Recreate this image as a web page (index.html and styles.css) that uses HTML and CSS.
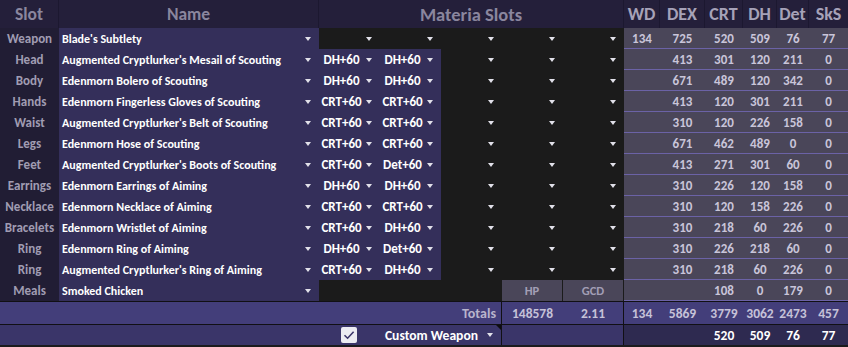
FILE: index.html
```html
<!DOCTYPE html>
<html>
<head>
<meta charset="utf-8">
<link rel="stylesheet" href="styles.css">
</head>
<body>
<div class="sheet">
  <div class="row head">
    <div class="h slot-h">Slot</div>
    <div class="h name-h">Name</div>
    <div class="h mat-h">Materia Slots</div>
    <div class="h sh">WD</div><div class="h sh">DEX</div><div class="h sh">CRT</div><div class="h sh">DH</div><div class="h sh">Det</div><div class="h sh">SkS</div>
  </div>

  <div class="row">
    <div class="slot">Weapon</div>
    <div class="name"><span>Blade's Subtlety</span><i class="dd"></i></div>
    <div class="mat e"><i class="dd"></i></div><div class="mat e"><i class="dd"></i></div><div class="mat e"><i class="dd"></i></div><div class="mat e"><i class="dd"></i></div><div class="mat e"><i class="dd"></i></div>
    <div class="st">134</div><div class="st">725</div><div class="st">520</div><div class="st">509</div><div class="st">76</div><div class="st">77</div>
  </div>

  <div class="row">
    <div class="slot">Head</div>
    <div class="name"><span>Augmented Cryptlurker's Mesail of Scouting</span><i class="dd"></i></div>
    <div class="mat f"><span>DH+60</span><i class="dd"></i></div><div class="mat f"><span>DH+60</span><i class="dd"></i></div><div class="mat e"><i class="dd"></i></div><div class="mat e"><i class="dd"></i></div><div class="mat e"><i class="dd"></i></div>
    <div class="st"></div><div class="st">413</div><div class="st">301</div><div class="st">120</div><div class="st">211</div><div class="st">0</div>
  </div>

  <div class="row">
    <div class="slot">Body</div>
    <div class="name"><span>Edenmorn Bolero of Scouting</span><i class="dd"></i></div>
    <div class="mat f"><span>DH+60</span><i class="dd"></i></div><div class="mat f"><span>DH+60</span><i class="dd"></i></div><div class="mat e"><i class="dd"></i></div><div class="mat e"><i class="dd"></i></div><div class="mat e"><i class="dd"></i></div>
    <div class="st"></div><div class="st">671</div><div class="st">489</div><div class="st">120</div><div class="st">342</div><div class="st">0</div>
  </div>

  <div class="row">
    <div class="slot">Hands</div>
    <div class="name"><span>Edenmorn Fingerless Gloves of Scouting</span><i class="dd"></i></div>
    <div class="mat f"><span>CRT+60</span><i class="dd"></i></div><div class="mat f"><span>CRT+60</span><i class="dd"></i></div><div class="mat e"><i class="dd"></i></div><div class="mat e"><i class="dd"></i></div><div class="mat e"><i class="dd"></i></div>
    <div class="st"></div><div class="st">413</div><div class="st">120</div><div class="st">301</div><div class="st">211</div><div class="st">0</div>
  </div>

  <div class="row">
    <div class="slot">Waist</div>
    <div class="name"><span>Augmented Cryptlurker's Belt of Scouting</span><i class="dd"></i></div>
    <div class="mat f"><span>CRT+60</span><i class="dd"></i></div><div class="mat f"><span>CRT+60</span><i class="dd"></i></div><div class="mat e"><i class="dd"></i></div><div class="mat e"><i class="dd"></i></div><div class="mat e"><i class="dd"></i></div>
    <div class="st"></div><div class="st">310</div><div class="st">120</div><div class="st">226</div><div class="st">158</div><div class="st">0</div>
  </div>

  <div class="row">
    <div class="slot">Legs</div>
    <div class="name"><span>Edenmorn Hose of Scouting</span><i class="dd"></i></div>
    <div class="mat f"><span>CRT+60</span><i class="dd"></i></div><div class="mat f"><span>CRT+60</span><i class="dd"></i></div><div class="mat e"><i class="dd"></i></div><div class="mat e"><i class="dd"></i></div><div class="mat e"><i class="dd"></i></div>
    <div class="st"></div><div class="st">671</div><div class="st">462</div><div class="st">489</div><div class="st">0</div><div class="st">0</div>
  </div>

  <div class="row">
    <div class="slot">Feet</div>
    <div class="name"><span>Augmented Cryptlurker's Boots of Scouting</span><i class="dd"></i></div>
    <div class="mat f"><span>CRT+60</span><i class="dd"></i></div><div class="mat f"><span>Det+60</span><i class="dd"></i></div><div class="mat e"><i class="dd"></i></div><div class="mat e"><i class="dd"></i></div><div class="mat e"><i class="dd"></i></div>
    <div class="st"></div><div class="st">413</div><div class="st">271</div><div class="st">301</div><div class="st">60</div><div class="st">0</div>
  </div>

  <div class="row">
    <div class="slot">Earrings</div>
    <div class="name"><span>Edenmorn Earrings of Aiming</span><i class="dd"></i></div>
    <div class="mat f"><span>DH+60</span><i class="dd"></i></div><div class="mat f"><span>DH+60</span><i class="dd"></i></div><div class="mat e"><i class="dd"></i></div><div class="mat e"><i class="dd"></i></div><div class="mat e"><i class="dd"></i></div>
    <div class="st"></div><div class="st">310</div><div class="st">226</div><div class="st">120</div><div class="st">158</div><div class="st">0</div>
  </div>

  <div class="row">
    <div class="slot">Necklace</div>
    <div class="name"><span>Edenmorn Necklace of Aiming</span><i class="dd"></i></div>
    <div class="mat f"><span>CRT+60</span><i class="dd"></i></div><div class="mat f"><span>CRT+60</span><i class="dd"></i></div><div class="mat e"><i class="dd"></i></div><div class="mat e"><i class="dd"></i></div><div class="mat e"><i class="dd"></i></div>
    <div class="st"></div><div class="st">310</div><div class="st">120</div><div class="st">158</div><div class="st">226</div><div class="st">0</div>
  </div>

  <div class="row">
    <div class="slot">Bracelets</div>
    <div class="name"><span>Edenmorn Wristlet of Aiming</span><i class="dd"></i></div>
    <div class="mat f"><span>CRT+60</span><i class="dd"></i></div><div class="mat f"><span>DH+60</span><i class="dd"></i></div><div class="mat e"><i class="dd"></i></div><div class="mat e"><i class="dd"></i></div><div class="mat e"><i class="dd"></i></div>
    <div class="st"></div><div class="st">310</div><div class="st">218</div><div class="st">60</div><div class="st">226</div><div class="st">0</div>
  </div>

  <div class="row">
    <div class="slot">Ring</div>
    <div class="name"><span>Edenmorn Ring of Aiming</span><i class="dd"></i></div>
    <div class="mat f"><span>DH+60</span><i class="dd"></i></div><div class="mat f"><span>Det+60</span><i class="dd"></i></div><div class="mat e"><i class="dd"></i></div><div class="mat e"><i class="dd"></i></div><div class="mat e"><i class="dd"></i></div>
    <div class="st"></div><div class="st">310</div><div class="st">226</div><div class="st">218</div><div class="st">60</div><div class="st">0</div>
  </div>

  <div class="row">
    <div class="slot">Ring</div>
    <div class="name"><span>Augmented Cryptlurker's Ring of Aiming</span><i class="dd"></i></div>
    <div class="mat f"><span>CRT+60</span><i class="dd"></i></div><div class="mat f"><span>DH+60</span><i class="dd"></i></div><div class="mat e"><i class="dd"></i></div><div class="mat e"><i class="dd"></i></div><div class="mat e"><i class="dd"></i></div>
    <div class="st"></div><div class="st">310</div><div class="st">218</div><div class="st">60</div><div class="st">226</div><div class="st">0</div>
  </div>

  <div class="row">
    <div class="slot">Meals</div>
    <div class="name"><span>Smoked Chicken</span><i class="dd"></i></div>
    <div class="mat e span3"></div>
    <div class="st sub">HP</div><div class="st sub">GCD</div>
    <div class="st"></div><div class="st"></div><div class="st">108</div><div class="st">0</div><div class="st">179</div><div class="st">0</div>
  </div>

  <div class="row totals">
    <div class="tl">Totals</div>
    <div class="tv hp">148578</div><div class="tv gcd">2.11</div>
    <div class="tv s1">134</div><div class="tv">5869</div><div class="tv">3779</div><div class="tv">3062</div><div class="tv">2473</div><div class="tv">457</div>
  </div>

  <div class="row custom">
    <div class="cfill"></div>
    <div class="cbox"><span class="check"><svg width="16" height="16" viewBox="0 0 16 16"><path d="M3.5 8.2 L6.6 11.2 L12.6 4.8" fill="none" stroke="#3b3569" stroke-width="1.6"/></svg></span></div>
    <div class="cw"><span>Custom Weapon</span><i class="dd"></i><b class="note"></b></div>
    <div class="cgap"></div>
    <div class="cs s1"></div><div class="cs"></div><div class="cs">520</div><div class="cs">509</div><div class="cs">76</div><div class="cs">77</div>
  </div>
</div>
</body>
</html>
```

FILE: styles.css
```css
html, body {
  margin: 0;
  padding: 0;
  background: #1b1b1d;
}
body {
  width: 848px;
  height: 347px;
  overflow: hidden;
  font-family: Carlito, "Liberation Sans Narrow", "Liberation Sans", sans-serif;
  font-weight: bold;
}
.sheet {
  display: flex;
  flex-direction: column;
}
.row {
  display: grid;
  grid-template-columns: 59px 260px 61px 61px 61px 61px 61px 36px 45px 38px 34px 32px 39px;
  height: 21px;
}
.row.head {
  height: 28px;
  background: #241f3a;
}
.h {
  color: #8a869e;
  font-size: 17.5px;
  display: flex;
  align-items: center;
  justify-content: center;
  border-right: 1px solid #1c1830;
}
.mat-h { grid-column: span 5; font-size: 18.5px; }
.sh { color: #a6a2b8; font-size: 18px; }
.sh:last-child { border-right: none; }

.slot {
  background: #211d34;
  color: #a09cb2;
  font-size: 13px;
  display: flex;
  align-items: center;
  justify-content: center;
}
.name {
  background: #342f5a;
  color: #fff;
  font-size: 12px;
  display: flex;
  align-items: center;
  justify-content: space-between;
  padding: 0 8px 0 3px;
}
.dd {
  display: block;
  width: 0;
  height: 0;
  border-left: 3.5px solid transparent;
  border-right: 3.5px solid transparent;
  border-top: 4px solid #e2e1ea;
  flex: none;
}
.mat {
  display: flex;
  align-items: center;
  justify-content: flex-end;
  padding-right: 8px;
  color: #fff;
  font-size: 13px;
}
.mat.e { background: #1b1b1b; }
.mat.f {
  background: #342f5a;
  justify-content: space-between;
  padding-left: 0;
}
.mat.f span { flex: 1; text-align: center; padding-right: 2px; }
.span3 { grid-column: span 3; }

.st {
  background: #4a4659;
  color: #c9c5d9;
  font-size: 13px;
  display: flex;
  align-items: center;
  justify-content: center;
  border-bottom: 1px solid #6b62a6;
}
.st.sub {
  color: #a29eb5;
  font-size: 12.5px;
  border-bottom: none;
  border-right: 1px solid #1b1b1b;
}

.totals {
  border-top: 1px solid #111014;
  border-bottom: 1px solid #111014;
  height: 22px;
  background: #433e7a;
}
.tl {
  grid-column: 1 / 6;
  color: #b8b4cc;
  font-size: 14px;
  padding-right: 5px;
  display: flex;
  align-items: center;
  justify-content: flex-end;
  border-right: 1px solid #111014;
}
.tv {
  color: #c6c2d8;
  font-size: 13.5px;
  display: flex;
  align-items: center;
  justify-content: center;
}
.tv.gcd { border-right: 1px solid #111014; }

.custom {
  height: 20px;
  background: #3a3569;
}
.cfill { grid-column: 1 / 3; }
.cbox {
  display: flex;
  align-items: center;
  padding-left: 22px;
}
.check {
  display: block;
  width: 16px;
  height: 16px;
  background: #ececf2;
  border-radius: 2px;
}
.check svg { display: block; }
.cw {
  grid-column: span 2;
  position: relative;
  display: flex;
  align-items: center;
  justify-content: flex-end;
  gap: 9px;
  padding: 0 8px 0 0;
  color: #fff;
  font-size: 13.6px;
  border-right: 1px solid #111014;
}
.note {
  position: absolute;
  top: 0;
  right: 0;
  width: 0;
  height: 0;
  border-left: 5px solid transparent;
  border-top: 5px solid #0d0c10;
}
.cgap {
  grid-column: span 2;
  border-right: 1px solid #111014;
}
.cs {
  background: #2e2a50;
  color: #fff;
  font-size: 13.5px;
  display: flex;
  align-items: center;
  justify-content: center;
}
```
